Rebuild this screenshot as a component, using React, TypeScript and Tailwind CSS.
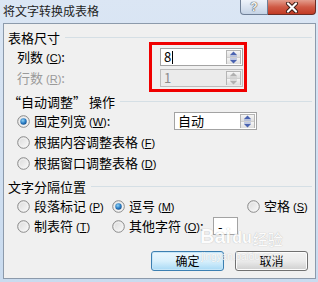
import React from 'react';

const Key = ({ k }: { k: string }) => (
  <span className="ml-[3px] font-['Liberation_Sans',sans-serif] text-[11px]">
    (<span className="underline underline-offset-1">{k}</span>)
  </span>
);

const Radio = ({ checked }: { checked?: boolean }) => (
  <svg width="13" height="13" viewBox="0 0 13 13" className="shrink-0">
    <defs>
      <linearGradient id="rg" x1="0" y1="0" x2="1" y2="1">
        <stop offset="0" stopColor="#d8d8d8" />
        <stop offset="1" stopColor="#fbfbfb" />
      </linearGradient>
      <radialGradient id="rd" cx="0.4" cy="0.35" r="0.7">
        <stop offset="0" stopColor="#8fd3f5" />
        <stop offset="0.6" stopColor="#2a7cc4" />
        <stop offset="1" stopColor="#164f8a" />
      </radialGradient>
    </defs>
    <circle cx="6.5" cy="6.5" r="5.8" fill="url(#rg)" stroke="#8a8a8a" strokeWidth="1" />
    <circle cx="6.5" cy="6.5" r="4.3" fill="none" stroke="#f4f4f4" strokeWidth="0.8" />
    {checked && <circle cx="6.5" cy="6.5" r="3.2" fill="url(#rd)" />}
  </svg>
);

const SpinBtn = ({ up, disabled }: { up?: boolean; disabled?: boolean }) => (
  <div className="flex h-[7px] items-center justify-center bg-gradient-to-b from-[#f6f6f6] to-[#dedede]">
    <svg width="9" height="6" viewBox="0 0 9 6">
      {up ? (
        <>
          <path d="M4.5 0.5 L8 4 L1 4 Z" fill={disabled ? '#b0b0b0' : '#4a63b0'} />
          <rect x="1" y="4.5" width="7" height="1" fill={disabled ? '#c8c8c8' : '#8ea0d4'} />
        </>
      ) : (
        <>
          <rect x="1" y="0.5" width="7" height="1" fill={disabled ? '#c8c8c8' : '#8ea0d4'} />
          <path d="M1 2 L8 2 L4.5 5.5 Z" fill={disabled ? '#b0b0b0' : '#4a63b0'} />
        </>
      )}
    </svg>
  </div>
);

const SpinBox = ({
  value,
  disabled,
  caret,
  width = 'w-[83px]',
}: {
  value: string;
  disabled?: boolean;
  caret?: boolean;
  width?: string;
}) => (
  <div
    className={`flex h-[18px] ${width} border ${
      disabled ? 'border-[#bcbcbc] bg-[#ebebeb]' : 'border-[#a3a3a3] bg-white'
    }`}
  >
    <div
      className={`flex flex-1 items-center pl-[3px] text-[13px] leading-[16px] ${
        disabled ? 'text-[#8c8c8c]' : 'text-black'
      }`}
    >
      {value}
      {caret && <span className="ml-px inline-block h-[13px] w-px bg-black" />}
    </div>
    <div className="m-px flex w-[15px] flex-col gap-px border border-[#b5b5b5] bg-[#d0d0d0]">
      <SpinBtn up disabled={disabled} />
      <SpinBtn disabled={disabled} />
    </div>
  </div>
);

const GroupHeader = ({ title, className = '' }: { title: React.ReactNode; className?: string }) => (
  <div className={`flex h-[20px] items-center pl-[4px] pr-[3px] ${className}`}>
    <span className="text-[13px] leading-none text-black">{title}</span>
    <div className="ml-[5px] h-px flex-1 bg-[#d5dfe5]" />
  </div>
);

const Button = ({ label, focused }: { label: string; focused?: boolean }) => (
  <div
    className={`flex h-[20px] w-[73px] items-center justify-center rounded-[3px] border text-[12px] text-black ${
      focused
        ? 'border-[#3c7fb1] bg-gradient-to-b from-[#eaf6fd] via-[#d9f0fc] to-[#a7d9f5] shadow-[inset_0_0_0_1px_#c6e6f8]'
        : 'border-[#707070] bg-gradient-to-b from-[#f2f2f2] via-[#ebebeb] to-[#cfcfcf] shadow-[inset_0_0_0_1px_#fcfcfc]'
    }`}
  >
    {label}
  </div>
);

export default function App() {
  return (
    <div className="relative h-[282px] w-[318px] overflow-hidden bg-gradient-to-b from-[#dbe6f4] to-[#c9dbef] font-['Noto_Sans_CJK_SC','Liberation_Sans',sans-serif] text-[12px] text-black">
      {/* title bar */}
      <div className="flex h-[23px] items-start justify-between">
        <div className="pl-[3px] pt-[3px] text-[12px] leading-[16px] text-[#1e1e1e]">将文字转换成表格</div>
        <div className="mr-[2px] flex">
          <div className="flex h-[15px] w-[28px] items-center justify-center rounded-bl-[4px] border border-t-0 border-[#6f7f96] bg-gradient-to-b from-[#eef3fa] to-[#c5d3e5] font-['Liberation_Sans',sans-serif] text-[12px] font-bold leading-none text-[#f5f5f5] [text-shadow:0_0_1px_#333,0_0_1px_#333]">
            ?
          </div>
          <div className="flex h-[15px] w-[48px] items-center justify-center rounded-br-[4px] border border-l-0 border-t-0 border-[#6b2c24] bg-gradient-to-b from-[#e39d8d] via-[#cf5a45] to-[#c13a24]">
            <svg width="14" height="11" viewBox="0 0 14 11">
              <path d="M3 1.5 L11 9.5 M11 1.5 L3 9.5" stroke="#3a1a14" strokeWidth="4" strokeLinecap="round" />
              <path d="M3 1.5 L11 9.5 M11 1.5 L3 9.5" stroke="#ffffff" strokeWidth="2.2" strokeLinecap="round" />
            </svg>
          </div>
        </div>
      </div>

      {/* client area */}
      <div className="ml-[3px] flex h-[256px] w-[313px] flex-col border border-[#8c9aab] bg-[#f0f0f0]">
        <GroupHeader title="表格尺寸" className="mt-[3px]" />
        <div className="flex h-[20px] items-center">
          <span className="w-[156px] pl-[13px] text-[13px]">
            列数<Key k="C" />:
          </span>
          <SpinBox value="8" caret />
        </div>
        <div className="mt-px flex h-[20px] items-center">
          <span className="w-[156px] pl-[13px] text-[13px] text-[#9a9a9a]">
            行数<Key k="R" />:
          </span>
          <SpinBox value="1" disabled />
        </div>

        <GroupHeader title="“自动调整” 操作" className="mt-[3px]" />
        <div className="flex h-[20px] items-center pl-[13px]">
          <Radio checked />
          <span className="ml-[4px] w-[140px] text-[13px]">
            固定列宽<Key k="W" />:
          </span>
          <SpinBox value="自动" />
        </div>
        <div className="mt-px flex h-[20px] items-center pl-[13px]">
          <Radio />
          <span className="ml-[4px] text-[13px]">
            根据内容调整表格<Key k="F" />
          </span>
        </div>
        <div className="mt-px flex h-[20px] items-center pl-[13px]">
          <Radio />
          <span className="ml-[4px] text-[13px]">
            根据窗口调整表格<Key k="D" />
          </span>
        </div>

        <GroupHeader title="文字分隔位置" className="mt-[3px]" />
        <div className="flex h-[20px] items-center pl-[13px]">
          <div className="flex w-[95px] items-center">
            <Radio />
            <span className="ml-[4px] text-[13px]">
              段落标记<Key k="P" />
            </span>
          </div>
          <div className="flex w-[135px] items-center">
            <Radio checked />
            <span className="ml-[4px] text-[13px]">
              逗号<Key k="M" />
            </span>
          </div>
          <div className="flex items-center">
            <Radio />
            <span className="ml-[4px] text-[13px]">
              空格<Key k="S" />
            </span>
          </div>
        </div>
        <div className="flex h-[20px] items-center pl-[13px]">
          <div className="flex w-[95px] items-center">
            <Radio />
            <span className="ml-[4px] text-[13px]">
              制表符<Key k="T" />
            </span>
          </div>
          <div className="flex items-center">
            <Radio />
            <span className="ml-[4px] w-[84px] text-[13px]">
              其他字符<Key k="O" />:
            </span>
            <div className="flex h-[18px] w-[25px] items-center border border-[#a3a3a3] bg-white pl-[4px] text-[13px] leading-none">
              -
            </div>
          </div>
        </div>

        <div className="mt-[15px] flex justify-end gap-[11px] pr-[7px]">
          <Button label="确定" focused />
          <Button label="取消" />
        </div>
      </div>

      {/* red annotation */}
      <div className="absolute left-[149px] top-[42px] h-[50px] w-[98px] border-[3px] border-[#f00000]" />

      {/* watermark */}
      <div className="pointer-events-none absolute left-[200px] top-[226px] flex flex-col items-center opacity-80">
        <div className="flex items-end font-['Liberation_Sans',sans-serif] text-[20px] font-bold leading-none text-white [text-shadow:0_0_1px_#9a9a9a]">
          Bai
          <span className="mx-[1px] text-[16px]">du</span>
          <span className="font-['Noto_Sans_CJK_SC',sans-serif] text-[15px] font-normal">经验</span>
        </div>
        <div className="mt-[6px] font-['Liberation_Sans',sans-serif] text-[10px] leading-none text-white [text-shadow:0_0_1px_#aaaaaa]">
          jingyan.baidu.com
        </div>
      </div>
    </div>
  );
}
